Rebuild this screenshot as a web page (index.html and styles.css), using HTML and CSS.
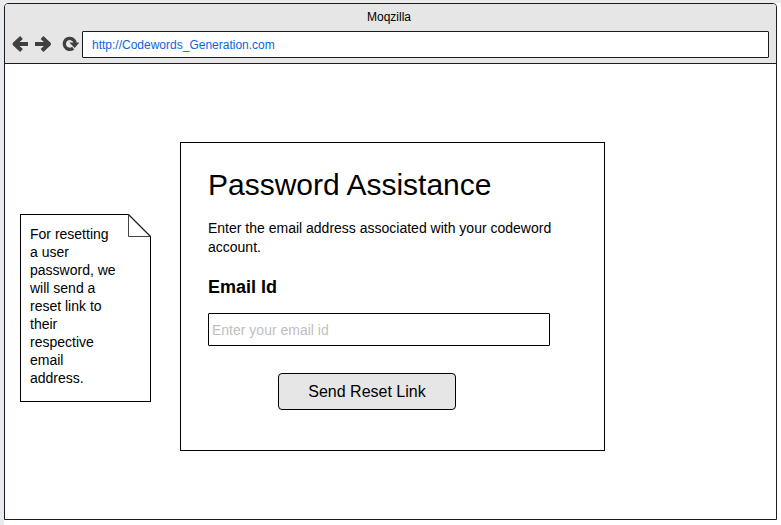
FILE: index.html
```html
<!DOCTYPE html>
<html lang="en">
<head>
<meta charset="utf-8">
<title>Password Assistance</title>
<link rel="stylesheet" href="styles.css">
</head>
<body>
<div class="window">
  <header class="chrome">
    <div class="window-title">Moqzilla</div>
    <div class="toolbar">
      <svg class="nav-icons" width="68" height="20" viewBox="0 0 68 20" fill="none" stroke="#404040" stroke-width="4">
        <path d="M3 10H17M10.5 3.5L3.500 10L10.500 16.500" stroke-linejoin="round"/>
        <path d="M24 10H38M31 3.500L38 10L31 16.500" stroke-linejoin="round"/>
        <path d="M62.200 14.200A5.500 5.500 0 1 1 64.200 9" stroke-width="3.400"/>
        <path d="M58.300 8.500H68.500L63.700 14Z" fill="#404040" stroke="none"/>
      </svg>
      <div class="url">http://Codewords_Generation.com</div>
    </div>
  </header>
  <main class="page">
    <aside class="note">
      <svg class="fold" width="23" height="23" viewBox="0 0 23 23">
        <path d="M0 0H23V23Z" fill="#fff"/>
        <path d="M.5 0V22.500H23" fill="none" stroke="#444"/>
        <path d="M.5 .5L22.500 22.500" stroke="#222" stroke-width="1.200"/>
      </svg>
      For resetting<br>a user<br>password, we<br>will send a<br>reset link to<br>their<br>respective<br>email<br>address.
    </aside>
    <section class="card">
      <h1>Password Assistance</h1>
      <p>Enter the email address associated with your codeword account.</p>
      <label for="email">Email Id</label>
      <input id="email" type="email" placeholder="Enter your email id">
      <button type="button">Send Reset Link</button>
    </section>
  </main>
</div>
</body>
</html>
```
FILE: styles.css
```css
* { box-sizing: border-box; }
body {
  margin: 0;
  height: 525px;
  padding: 3px 0 0 4px;
  overflow: hidden;
  background: linear-gradient(#ebebed, #ebebed) 0 0 / 100% 3px no-repeat,
    linear-gradient(#e8ebed, #e8ebed) 0 0 / 4px 100% no-repeat, #fff;
  font-family: "Liberation Sans", Arial, sans-serif;
  color: #000;
}
.window {
  width: 773px;
  height: 517px;
  border: 1px solid #1c1c1e;
  border-radius: 4px 4px 0 0;
  background: #fff;
  overflow: hidden;
}
.chrome {
  height: 60px;
  background: #e6e6e6;
  border-bottom: 1px solid #1c1c1e;
}
.window-title {
  height: 27px;
  padding-right: 3px;
  font-size: 12px;
  line-height: 27px;
  text-align: center;
}
.toolbar { display: flex; padding: 0 7px 0 6px; }
.nav-icons { margin: 3px 3px 0 0; }
.url {
  flex: 1;
  height: 27px;
  padding-left: 9px;
  border: 1px solid #1c1c1e;
  border-radius: 1px;
  background: #fff;
  color: #0a66e0;
  font-size: 12px;
  line-height: 26px;
}
.page { display: flex; align-items: flex-start; gap: 29px; padding: 78px 0 0 15px; }
.note {
  position: relative;
  width: 131px;
  height: 188px;
  margin-top: 72px;
  padding: 10px 9px;
  border: 1px solid #000;
  font-size: 14px;
  line-height: 18px;
}
.fold { position: absolute; top: -1px; right: -1px; }
.card {
  width: 425px;
  height: 309px;
  padding: 23px 27px;
  border: 1px solid #000;
}
h1 { margin: 0; font-size: 30px; font-weight: 400; line-height: 38px; }
p { margin: 15px 0 0; font-size: 14px; line-height: 19px; }
label { display: block; margin-top: 19px; font-size: 18px; font-weight: 700; line-height: 22px; }
input {
  display: block;
  width: 342px;
  height: 33px;
  margin-top: 15px;
  padding: 0 3px;
  border: 1px solid #000;
  border-radius: 1px;
  font: 14px "Liberation Sans", Arial, sans-serif;
}
input::placeholder { color: #bfbfbf; }
button {
  display: block;
  width: 178px;
  height: 37px;
  margin: 27px 0 0 70px;
  border: 1px solid #000;
  border-radius: 4px;
  background: #e6e6e6;
  color: #000;
  font: 16px "Liberation Sans", Arial, sans-serif;
}
```
